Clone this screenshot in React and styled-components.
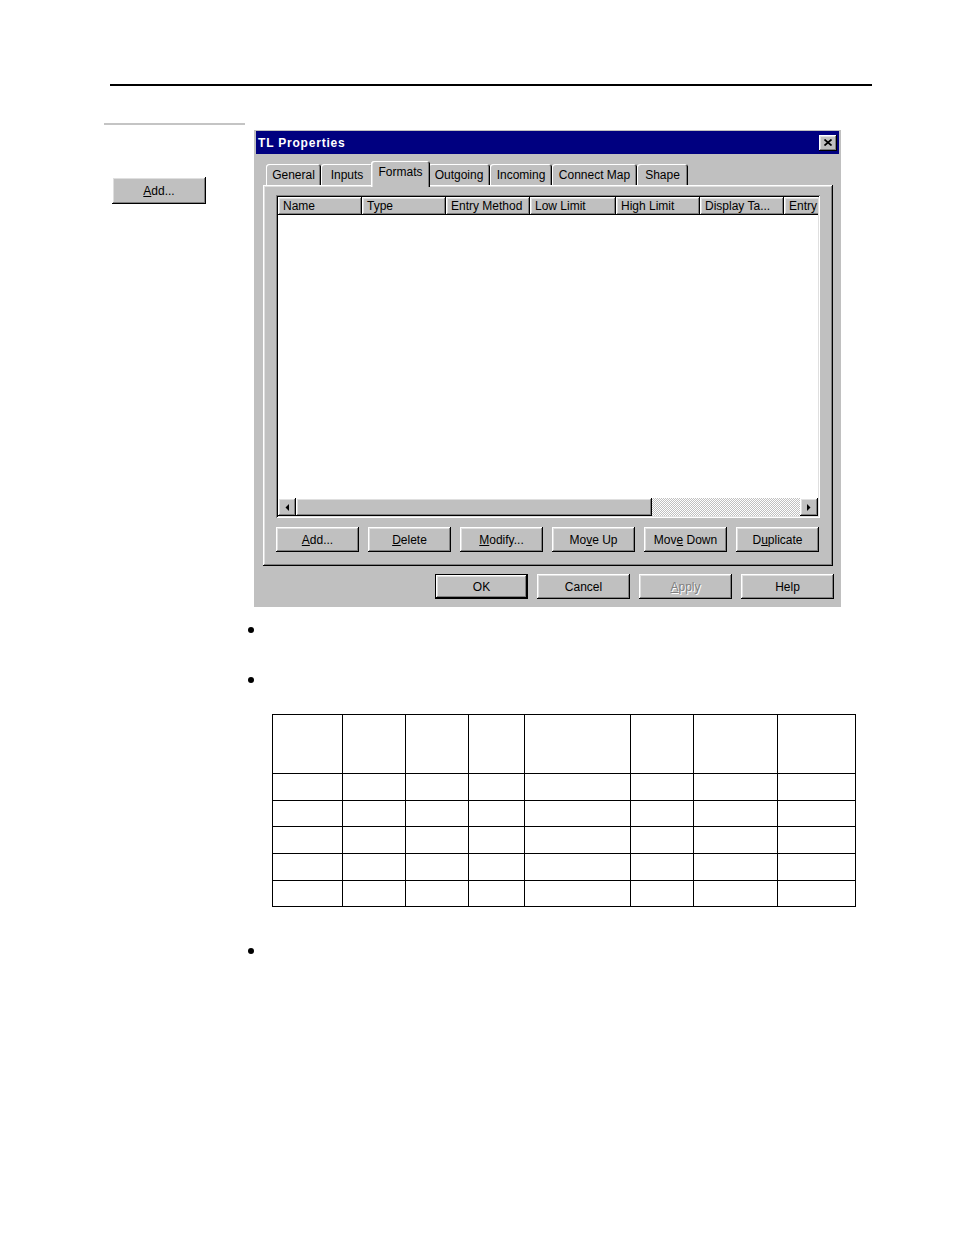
import React from "react";
import styled, { createGlobalStyle, css } from "styled-components";

const GlobalStyle = createGlobalStyle`
  html, body { margin: 0; padding: 0; background: #fff; }
  body { font-family: "Liberation Sans", Arial, sans-serif; color: #000; }
  * { box-sizing: border-box; }
`;

const raised = css`
  box-shadow: inset -1px -1px #000, inset 1px 1px #fff, inset -2px -2px #808080,
    inset 2px 2px #dfdfdf;
`;

const Page = styled.div`
  width: 954px;
  min-height: 1235px;
  padding-top: 84px;
`;

const TopRule = styled.div`
  margin-left: 110px;
  width: 762px;
  height: 2px;
  background: #000;
`;

const Upper = styled.div`
  display: flex;
  padding-left: 104px;
`;

const Sidebar = styled.aside`
  width: 150px;
  padding-top: 37px;
  display: flex;
  flex-direction: column;
  align-items: flex-start;
`;

const SideRule = styled.div`
  width: 141px;
  height: 2px;
  background: #c4c4c4;
`;

const MainCol = styled.main`
  padding-top: 44px;
`;

const Button = styled.button`
  width: ${(p) => p.$w}px;
  height: ${(p) => p.$h || 25}px;
  margin: ${(p) => p.$m || "0"};
  padding: 0;
  border: none;
  background: #c0c0c0;
  font-family: "Liberation Sans", Arial, sans-serif;
  font-size: 12px;
  color: #000;
  display: flex;
  align-items: center;
  justify-content: center;
  flex-shrink: 0;
  ${raised}
  ${(p) =>
    p.$default &&
    css`
      box-shadow: inset 0 0 0 1px #000, inset -2px -2px #000, inset 2px 2px #fff,
        inset -3px -3px #808080, inset 3px 3px #dfdfdf;
    `}
  &:disabled {
    color: #808080;
    text-shadow: 1px 1px #fff;
  }
`;

const Key = styled.u`
  text-decoration: underline;
  text-underline-offset: 1px;
`;

const Dialog = styled.div`
  width: 587px;
  height: 477px;
  background: #c0c0c0;
  padding: 1px 2px 8px;
  display: flex;
  flex-direction: column;
`;

const TitleBar = styled.div`
  height: 23px;
  background: #000080;
  display: flex;
  align-items: center;
  justify-content: space-between;
  padding: 0 2px 0 2px;
`;

const Title = styled.span`
  color: #fff;
  font-weight: bold;
  font-size: 12px;
  letter-spacing: 0.8px;
`;

const CloseBox = styled.div`
  width: 18px;
  height: 16px;
  background: #c0c0c0;
  display: flex;
  align-items: center;
  justify-content: center;
  ${raised}
`;

const TabRow = styled.div`
  margin-top: 7px;
  height: 24px;
  display: flex;
  align-items: flex-end;
  padding-left: 10px;
  position: relative;
  z-index: 2;
`;

const Tab = styled.div`
  width: ${(p) => p.$w}px;
  height: 21px;
  flex-shrink: 0;
  font-size: 12px;
  display: flex;
  align-items: center;
  justify-content: center;
  padding-top: 1px;
  background: #c0c0c0;
  border-radius: 3px 3px 0 0;
  box-shadow: inset 1px 1px #fff, inset -1px 0 #000, inset -2px 0 #808080;
  ${(p) =>
    p.$active &&
    css`
      width: ${p.$w + 4}px;
      height: 26px;
      margin: 0 -2px -2px;
      padding-top: 0;
      padding-bottom: 4px;
      position: relative;
      z-index: 3;
      box-shadow: inset 1px 1px #fff, inset 2px 0 #dfdfdf, inset -1px 0 #000,
        inset -2px 0 #808080;
    `}
`;

const Panel = styled.div`
  margin: 0 6px 0 7px;
  height: 381px;
  padding: 10px 13px 14px;
  display: flex;
  flex-direction: column;
  gap: 9px;
  ${raised}
`;

const ListView = styled.div`
  height: 323px;
  background: #fff;
  padding: 2px;
  display: flex;
  flex-direction: column;
  box-shadow: inset 1px 1px #808080, inset -1px -1px #fff, inset 2px 2px #000,
    inset -2px -2px #dfdfdf;
`;

const HeaderRow = styled.div`
  height: 18px;
  display: flex;
  overflow: hidden;
  flex-shrink: 0;
`;

const HeaderCell = styled.div`
  width: ${(p) => p.$w}px;
  flex-shrink: 0;
  height: 18px;
  background: #c0c0c0;
  font-size: 12px;
  line-height: 18px;
  padding-left: 5px;
  white-space: nowrap;
  overflow: hidden;
  ${raised}
`;

const ListBody = styled.div`
  flex: 1;
  background: #fff;
`;

const ScrollBar = styled.div`
  height: 18px;
  display: flex;
  flex-shrink: 0;
`;

const ArrowBtn = styled.div`
  width: 18px;
  height: 18px;
  background: #c0c0c0;
  display: flex;
  align-items: center;
  justify-content: center;
  ${raised}
`;

const Thumb = styled.div`
  width: 356px;
  height: 18px;
  background: #c0c0c0;
  ${raised}
`;

const Track = styled.div`
  flex: 1;
  background: repeating-conic-gradient(#c0c0c0 0 25%, #fff 0 50%) 0 0 / 2px 2px;
`;

const ButtonRow = styled.div`
  display: flex;
  gap: 9px;
`;

const BottomBar = styled.div`
  margin-top: 8px;
  display: flex;
  justify-content: flex-end;
  gap: 9px;
  padding-right: 5px;
`;

const Notes = styled.section`
  margin-top: 20px;
  padding-left: 248px;
`;

const BulletItem = styled.div`
  height: ${(p) => p.$h}px;
  margin-top: ${(p) => p.$top || 0}px;
`;

const Dot = styled.span`
  display: block;
  width: 6px;
  height: 6px;
  border-radius: 50%;
  background: #000;
`;

const Grid = styled.table`
  margin-left: 24px;
  width: 583px;
  border-collapse: collapse;
  table-layout: fixed;
`;

const Cell = styled.td`
  border: 1px solid #000;
  padding: 0;
  height: ${(p) => p.$h}px;
`;

const TABS = [
  ["General", 55],
  ["Inputs", 52],
  ["Formats", 55, true],
  ["Outgoing", 62],
  ["Incoming", 62],
  ["Connect Map", 85],
  ["Shape", 51],
];

const COLS = [
  ["Name", 84],
  ["Type", 84],
  ["Entry Method", 84],
  ["Low Limit", 86],
  ["High Limit", 84],
  ["Display Ta...", 84],
  ["Entry", 60],
];

const TABLE_COLS = [70, 63, 63, 56, 106, 63, 84, 78];
const TABLE_ROWS = [59, 27, 26, 27, 27, 26];

const CloseIcon = () => (
  <svg width="8" height="7" viewBox="0 0 8 7">
    <path d="M0.5 0.5 L7.5 6.5 M7.5 0.5 L0.5 6.5" stroke="#000" strokeWidth="1.7" />
  </svg>
);

const ArrowLeft = () => (
  <svg width="4" height="7" viewBox="0 0 4 7">
    <polygon points="4,0 4,7 0.5,3.5" fill="#000" />
  </svg>
);

const ArrowRight = () => (
  <svg width="4" height="7" viewBox="0 0 4 7">
    <polygon points="0,0 0,7 3.5,3.5" fill="#000" />
  </svg>
);

export default function App() {
  return (
    <Page>
      <GlobalStyle />
      <TopRule />
      <Upper>
        <Sidebar>
          <SideRule />
          <Button $w={94} $h={27} $m="52px 0 0 8px">
            <span>
              <Key>A</Key>dd...
            </span>
          </Button>
        </Sidebar>
        <MainCol>
          <Dialog>
            <TitleBar>
              <Title>TL Properties</Title>
              <CloseBox>
                <CloseIcon />
              </CloseBox>
            </TitleBar>
            <TabRow>
              {TABS.map(([label, w, active]) => (
                <Tab key={label} $w={w} $active={active}>
                  {label}
                </Tab>
              ))}
            </TabRow>
            <Panel>
              <ListView>
                <HeaderRow>
                  {COLS.map(([label, w]) => (
                    <HeaderCell key={label} $w={w}>
                      {label}
                    </HeaderCell>
                  ))}
                </HeaderRow>
                <ListBody />
                <ScrollBar>
                  <ArrowBtn>
                    <ArrowLeft />
                  </ArrowBtn>
                  <Thumb />
                  <Track />
                  <ArrowBtn>
                    <ArrowRight />
                  </ArrowBtn>
                </ScrollBar>
              </ListView>
              <ButtonRow>
                <Button $w={83}>
                  <span>
                    <Key>A</Key>dd...
                  </span>
                </Button>
                <Button $w={83}>
                  <span>
                    <Key>D</Key>elete
                  </span>
                </Button>
                <Button $w={83}>
                  <span>
                    <Key>M</Key>odify...
                  </span>
                </Button>
                <Button $w={83}>
                  <span>
                    Mo<Key>v</Key>e Up
                  </span>
                </Button>
                <Button $w={83}>
                  <span>
                    Mov<Key>e</Key> Down
                  </span>
                </Button>
                <Button $w={83}>
                  <span>
                    D<Key>u</Key>plicate
                  </span>
                </Button>
              </ButtonRow>
            </Panel>
            <BottomBar>
              <Button $w={93} $default>
                OK
              </Button>
              <Button $w={93}>Cancel</Button>
              <Button $w={93} disabled>
                <span>
                  <Key>A</Key>pply
                </span>
              </Button>
              <Button $w={93}>Help</Button>
            </BottomBar>
          </Dialog>
        </MainCol>
      </Upper>
      <Notes>
        <BulletItem $h={50}>
          <Dot />
        </BulletItem>
        <BulletItem $h={37}>
          <Dot />
        </BulletItem>
        <Grid>
          <colgroup>
            {TABLE_COLS.map((w, i) => (
              <col key={i} style={{ width: w }} />
            ))}
          </colgroup>
          <tbody>
            {TABLE_ROWS.map((h, r) => (
              <tr key={r}>
                {TABLE_COLS.map((_, c) => (
                  <Cell key={c} $h={h} />
                ))}
              </tr>
            ))}
          </tbody>
        </Grid>
        <BulletItem $h={10} $top={41}>
          <Dot />
        </BulletItem>
      </Notes>
    </Page>
  );
}
